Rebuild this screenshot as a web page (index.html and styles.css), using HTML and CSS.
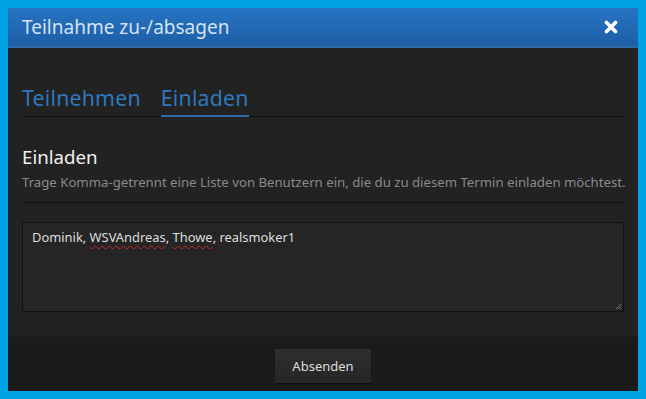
FILE: index.html
```html
<!DOCTYPE html>
<html lang="de">
<head>
<meta charset="utf-8">
<title>Teilnahme zu-/absagen</title>
<link rel="stylesheet" href="styles.css">
</head>
<body>
<div class="modal">
  <div class="modal-header">
    <span class="modal-title">Teilnahme zu-/absagen</span>
    <svg class="close" width="14" height="14" viewBox="0 0 14 14" aria-label="Schließen">
      <path d="M2.5 2.5 L11.5 11.5 M11.5 2.5 L2.5 11.5" stroke="#fff" stroke-width="3.6" stroke-linecap="round"/>
    </svg>
  </div>
  <div class="modal-body">
    <div class="tabs">
      <span class="tab">Teilnehmen</span>
      <span class="tab active">Einladen</span>
    </div>
    <div class="section">
      <h2 class="section-title">Einladen</h2>
      <p class="section-desc">Trage Komma-getrennt eine Liste von Benutzern ein, die du zu diesem Termin einladen möchtest.</p>
    </div>
    <div class="textarea">
      <span>Dominik, <span class="spell">WSVAndreas</span>, <span class="spell">Thowe</span>, realsmoker1</span>
      <svg class="grip" width="7" height="7" viewBox="0 0 7 7"><path d="M6 1 L1 6 M6 3.5 L3.5 6 M6 5.5 L5.5 6" stroke="#777" stroke-width="1"/></svg>
    </div>
  </div>
  <div class="modal-footer">
    <button class="btn">Absenden</button>
  </div>
</div>
</body>
</html>
```
FILE: styles.css
```css
html, body {
  height: 100%;
}
body {
  margin: 0;
  padding: 8px;
  box-sizing: border-box;
  background: #00a2e6;
  font-family: "Noto Sans", "Open Sans", sans-serif;
}
.modal {
  height: 100%;
  display: flex;
  flex-direction: column;
  background: #222222;
}
.modal-header {
  height: 38px;
  display: flex;
  align-items: center;
  justify-content: space-between;
  padding: 0 20px 0 14px;
  background: linear-gradient(#2674c2, #1d5ea6);
  border-bottom: 2px solid #2f6aa8;
}
.modal-title {
  color: #d6e2ee;
  font-size: 19px;
}
.close {
  display: block;
}
.modal-body {
  flex: 1;
  padding: 0 14px;
  display: flex;
  flex-direction: column;
}
.tabs {
  display: flex;
  gap: 20px;
  padding-top: 35px;
  border-bottom: 1px solid #111;
}
.tab {
  color: #2d78be;
  font-size: 21.3px;
  line-height: 30px;
  padding-bottom: 2px;
  letter-spacing: 0.2px;
}
.tab.active {
  border-bottom: 2px solid #2e6aa6;
  margin-bottom: -1px;
}
.section {
  padding-top: 29px;
  padding-bottom: 11px;
  border-bottom: 1px solid #111;
}
.section-title {
  margin: 0;
  font-weight: normal;
  color: #f0f0f0;
  font-size: 18.7px;
  line-height: 22px;
}
.section-desc {
  margin: 5px 0 0;
  color: #8a8a8a;
  font-size: 13.2px;
  line-height: 18px;
  white-space: nowrap;
}
.textarea {
  position: relative;
  margin-top: 19px;
  height: 90px;
  box-sizing: border-box;
  background: #252525;
  border: 1px solid #111;
  padding: 6px 9px;
  color: #dddddd;
  font-size: 12.9px;
  line-height: 16px;
}
.spell {
  text-decoration: underline wavy #c0262a;
  text-decoration-thickness: 1px;
  text-underline-offset: 3px;
}
.grip {
  position: absolute;
  right: 1px;
  bottom: 1px;
}
.modal-footer {
  height: 42px;
  flex: none;
  display: flex;
  align-items: flex-start;
  justify-content: center;
  padding-top: 12px;
  background: #1b1b1b;
  border-top: 1px solid #1e1e1e;
}
.btn {
  width: 96px;
  height: 34px;
  border: none;
  background: linear-gradient(#2e2e2e, #262626);
  color: #dcdcdc;
  font-family: inherit;
  font-size: 13px;
  box-shadow: 0 1px 1px rgba(0,0,0,0.4);
}
```
